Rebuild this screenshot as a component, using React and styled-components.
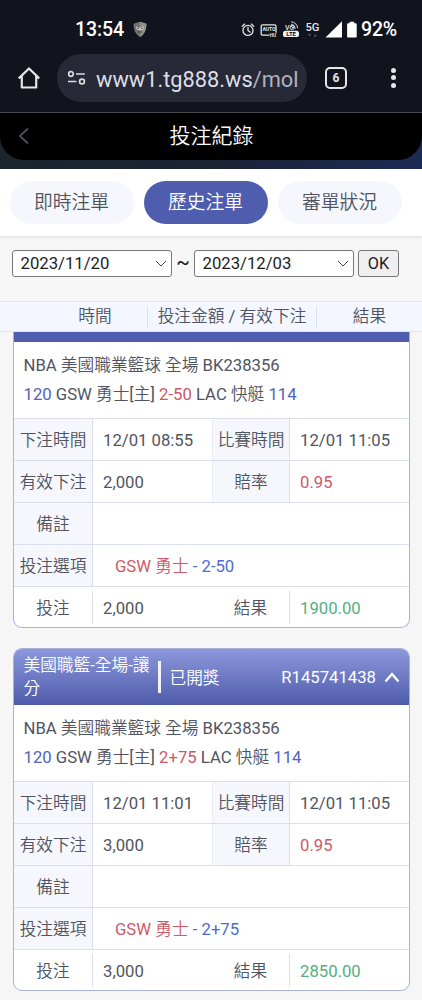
import styled, { createGlobalStyle } from "styled-components";

const bets = [
  {
    id: "R145741437",
    scrolled: true,
    type: "美國職籃-全場-讓分",
    line: "2-50",
    betTime: "12/01 08:55",
    gameTime: "12/01 11:05",
    amount: "2,000",
    odds: "0.95",
    result: "1900.00",
  },
  {
    id: "R145741438",
    type: "美國職籃-全場-讓分",
    line: "2+75",
    betTime: "12/01 11:01",
    gameTime: "12/01 11:05",
    amount: "3,000",
    odds: "0.95",
    result: "2850.00",
  },
];

function StatusIcons() {
  return (
    <svg width="120" height="20" viewBox="0 0 120 20" fill="none">
      <g stroke="#e4e5ea" strokeWidth="1.3" strokeLinecap="round">
        <circle cx="7" cy="10.4" r="5" />
        <path d="M7 7.5v3l2 1.6M1.3 6.3l2.4-2.2M12.7 6.3l-2.4-2.2" />
        <path d="M28 15.2h-6.5a1.3 1.3 0 0 1-1.3-1.3V6.2a1.3 1.3 0 0 1 1.3-1.3h12.2A1.3 1.3 0 0 1 35 6.2v6" />
      </g>
      <text x="21.4" y="11.4" fontSize="5" fontWeight="700" fill="#e4e5ea">AUTO</text>
      <text x="28.8" y="17" fontSize="4.6" fontWeight="700" fill="#e4e5ea">HU</text>
      <text x="44" y="9.8" fontSize="7" fontWeight="500" fill="#e4e5ea">VO</text>
      <path
        d="M50 4.1a5 5 0 0 1 4.3 4.7M50.3 1.8a7 7 0 0 1 6.4 6.4M49.7 6.2a3 3 0 0 1 2.5 2.5"
        stroke="#e4e5ea"
        strokeWidth="1"
      />
      <rect x="42" y="10.7" width="16" height="6.4" rx="2.6" fill="#f2f2f5" />
      <text x="45.3" y="16.2" fontSize="6" fontWeight="700" fill="#12141d">LTE</text>
      <text x="64.4" y="11" fontSize="11.2" fontWeight="500" fill="#e4e5ea">5G</text>
      <path d="M67 14h3.2l-1.6 2.4zM72.6 16.4h3.2L74.2 14z" fill="#555862" />
      <path d="M101 1.2v16.2H84.5z" fill="#fff" />
      <path
        d="M108.6 1.7h4.6v1.6h1.5a1 1 0 0 1 1 1v12.1a1 1 0 0 1-1 1h-7.6a1 1 0 0 1-1-1V4.3a1 1 0 0 1 1-1h1.5z"
        fill="#fff"
      />
    </svg>
  );
}

function ShieldIcon() {
  return (
    <svg width="14" height="17" viewBox="0 0 14 17">
      <path d="M7 .8 13.4 2.7C13.4 9 11.5 13.4 7 16 2.5 13.4.6 9 .6 2.7z" fill="#71716f" />
      <path d="M7 .8 13.4 2.7C13.4 9 11.5 13.4 7 16z" fill="#8e8e8b" />
      <path d="M2.8 5.2 6.3 7l.7-.8.7.8 3.5-1.8-1 3.6L7 9.3 3.8 8.8z" fill="#c9c9c5" />
      <path d="M4.2 7l1.7.9M9.8 7l-1.7.9M5 11h4" stroke="#3b3b3b" strokeWidth=".9" />
    </svg>
  );
}

function HomeIcon() {
  return (
    <svg width="24" height="24" viewBox="0 0 24 24" fill="none">
      <path
        d="M1.8 12.4 12 2.5l10.2 9.9M4.8 10v11.5h14.4V10"
        stroke="#e5e5ea"
        strokeWidth="2.2"
        strokeLinejoin="round"
      />
    </svg>
  );
}

function TuneIcon() {
  return (
    <svg width="20" height="16" viewBox="0 0 20 16" fill="none" stroke="#dcdde3" strokeWidth="1.7">
      <circle cx="4" cy="4" r="2.3" />
      <path d="M9 4h8.8M1 11.5h8.4" />
      <circle cx="15" cy="11.5" r="2.4" />
    </svg>
  );
}

function Chevron({ width, height, stroke, weight, d }) {
  return (
    <svg width={width} height={height} viewBox={`0 0 ${width} ${height}`} fill="none">
      <path d={d} stroke={stroke} strokeWidth={weight} />
    </svg>
  );
}

function DateSelect({ value }) {
  return (
    <SelectBox>
      {value}
      <Chevron width={12} height={7} stroke="#444" weight={1} d="M1 1l5 5 5-5" />
    </SelectBox>
  );
}

function BetCard({ bet }) {
  return (
    <Card $scrolled={bet.scrolled}>
      {bet.scrolled ? (
        <CardEdge />
      ) : (
        <CardHead>
          <BetType>{bet.type}</BetType>
          <HeadLine />
          <span>已開獎</span>
          <BetId>{bet.id}</BetId>
          <Chevron width={16} height={11} stroke="#fff" weight={2.2} d="M1.5 9.5 8 2l6.5 7.5" />
        </CardHead>
      )}
      <Info>
        <p>NBA 美國職業籃球 全場 BK238356</p>
        <p>
          <Tint $color="#5064bd">120</Tint> GSW 勇士[主] <Tint $color="#d25563">{bet.line}</Tint> LAC 快艇{" "}
          <Tint $color="#5064bd">114</Tint>
        </p>
      </Info>
      <Row>
        <Label>下注時間</Label>
        <Value>{bet.betTime}</Value>
        <Label $second>比賽時間</Label>
        <Value>{bet.gameTime}</Value>
      </Row>
      <Row>
        <Label>有效下注</Label>
        <Value>{bet.amount}</Value>
        <Label $second>賠率</Label>
        <Value $color="#cf5966">{bet.odds}</Value>
      </Row>
      <Row $wide>
        <Label>備註</Label>
        <Value />
      </Row>
      <Row $wide>
        <Label>投注選項</Label>
        <Pick>
          <Tint $color="#cf5966">GSW 勇士</Tint>
          <Tint $color="#5069d4"> - {bet.line}</Tint>
        </Pick>
      </Row>
      <Row>
        <Total>投注</Total>
        <Value>{bet.amount}</Value>
        <Total>結果</Total>
        <Value $color="#52b080">{bet.result}</Value>
      </Row>
    </Card>
  );
}

function App() {
  return (
    <Page>
      <GlobalStyle />
      <StatusBar>
        <Clock>13:54</Clock>
        <ShieldIcon />
        <StatusRight>
          <StatusIcons />
          <Battery>92%</Battery>
        </StatusRight>
      </StatusBar>
      <BrowserBar>
        <HomeIcon />
        <Address>
          <TuneIcon />
          <Url>
            www1.tg888.ws<span>/mol</span>
          </Url>
        </Address>
        <TabCount>6</TabCount>
        <Dots>
          <i />
          <i />
          <i />
        </Dots>
      </BrowserBar>
      <TitleWrap>
        <TitleBar>
          <Chevron width={12} height={18} stroke="#4c4d5a" weight={2} d="M10 1.5 2 9l8 7.5" />
          <h1>投注紀錄</h1>
        </TitleBar>
      </TitleWrap>
      <Tabs>
        <Tab>即時注單</Tab>
        <Tab $active>歷史注單</Tab>
        <Tab>審單狀況</Tab>
      </Tabs>
      <DateRow>
        <DateSelect value="2023/11/20" />
        <Tilde>~</Tilde>
        <DateSelect value="2023/12/03" />
        <OkButton>OK</OkButton>
      </DateRow>
      <Columns>
        <span>時間</span>
        <span>投注金額 / 有效下注</span>
        <span>結果</span>
      </Columns>
      <List>
        {bets.map((bet) => (
          <BetCard key={bet.id} bet={bet} />
        ))}
      </List>
    </Page>
  );
}

const GlobalStyle = createGlobalStyle`
  * {
    box-sizing: border-box;
  }
  body {
    margin: 0;
    background-color: #f6f6f7;
    font-family: Roboto, "Noto Sans CJK TC DemiLight", "Noto Sans CJK TC", sans-serif;
  }
  h1,
  p {
    margin: 0;
  }
  svg {
    display: block;
    flex-shrink: 0;
  }
`;

const Page = styled.div`
  width: 422px;
  height: 1000px;
  overflow: hidden;
  font-size: 16.7px;
  color: #505461;
`;

const StatusBar = styled.div`
  display: flex;
  align-items: center;
  height: 54px;
  padding: 5px 25px 0 75px;
  background-color: #12141d;
  color: #fff;
`;

const Clock = styled.span`
  margin-right: 9px;
  font-size: 19.5px;
  font-weight: 500;
  letter-spacing: -0.1px;
`;

const StatusRight = styled.div`
  display: flex;
  align-items: center;
  margin-left: auto;
`;

const Battery = styled.span`
  width: 36px;
  font-size: 19.5px;
  font-weight: 500;
  letter-spacing: -0.2px;
`;

const BrowserBar = styled.div`
  display: flex;
  align-items: center;
  height: 59px;
  padding: 0 26px 11px 17px;
  background-color: #12141d;
  border-bottom: 1px solid #45464b;
`;

const Address = styled.div`
  display: flex;
  align-items: center;
  width: 250px;
  height: 48px;
  margin-left: 16px;
  padding-left: 10px;
  border-radius: 24px;
  background-color: #272936;
`;

const Url = styled.span`
  margin-left: 9px;
  padding-top: 3px;
  font-size: 21.8px;
  color: #dedfe6;
  white-space: nowrap;
  span {
    color: #b0b2be;
  }
`;

const TabCount = styled.div`
  width: 22px;
  height: 22px;
  margin-left: 18px;
  border: 2px solid #e5e5ea;
  border-radius: 5px;
  font-size: 12px;
  font-weight: 700;
  line-height: 18px;
  text-align: center;
  color: #e5e5ea;
`;

const Dots = styled.div`
  display: flex;
  flex-direction: column;
  gap: 2.5px;
  margin-left: auto;
  i {
    width: 5px;
    height: 5px;
    border-radius: 50%;
    background-color: #e5e5ea;
  }
`;

const TitleWrap = styled.div`
  height: 56px;
  background: linear-gradient(90deg, #1b252c, #1b2335 50%, #1c2b55);
`;

const TitleBar = styled.header`
  display: flex;
  align-items: center;
  height: 47px;
  padding: 0 29px 2px 18px;
  border-radius: 0 0 24px 24px;
  background-color: #000;
  h1 {
    flex: 1;
    padding-bottom: 3px;
    font-size: 21px;
    font-weight: 400;
    text-align: center;
    color: #fff;
  }
`;

const Tabs = styled.nav`
  display: flex;
  gap: 10px;
  height: 67px;
  padding: 12px 9.5px 0;
  background-color: #fff;
  box-shadow: 0 1px 3px rgba(0, 0, 0, 0.12);
`;

const Tab = styled.div`
  width: 124px;
  height: 43px;
  border-radius: 22px;
  font-size: 18.8px;
  line-height: 45px;
  text-align: center;
  color: ${(props) => (props.$active ? "#fff" : "#505461")};
  background-color: ${(props) => (props.$active ? "#4f5dae" : "#f6f7fc")};
`;

const DateRow = styled.div`
  display: flex;
  height: 65px;
  padding: 14px 12px 0;
  color: #1c1c1c;
`;

const SelectBox = styled.div`
  display: flex;
  align-items: center;
  justify-content: space-between;
  width: 160px;
  height: 27px;
  padding: 0 4px 0 7.5px;
  border: 1px solid #77777a;
  border-radius: 3px;
  background-color: #fff;
`;

const Tilde = styled.span`
  width: 22px;
  font-size: 20px;
  line-height: 25px;
  text-align: center;
`;

const OkButton = styled.button`
  width: 41px;
  height: 27px;
  margin-left: 4px;
  padding: 0;
  border: 1px solid #77777a;
  border-radius: 3px;
  background-color: #efefef;
  font: inherit;
  font-size: 16.2px;
  color: #1c1c1c;
`;

const Columns = styled.div`
  display: flex;
  align-items: center;
  height: 31px;
  border: 1px solid #dfe4f4;
  border-width: 1px 0;
  background-color: #f4f7ff;
  span {
    width: 169px;
    line-height: 22px;
    text-align: center;
    white-space: nowrap;
  }
  span:first-child {
    width: 148px;
    padding-left: 43px;
    border-right: 1px solid #dbe1f3;
  }
  span:nth-child(2) {
    border-right: 1px solid #dbe1f3;
  }
  span:last-child {
    width: 105px;
  }
`;

const List = styled.main`
  display: flex;
  flex-direction: column;
  gap: 20px;
  padding: 0 12px 0 13px;
`;

const Card = styled.section`
  height: ${(props) => (props.$scrolled ? "296px" : "343px")};
  overflow: hidden;
  border: 1px solid #a9b1d6;
  border-top-width: ${(props) => (props.$scrolled ? 0 : "1px")};
  border-radius: ${(props) => (props.$scrolled ? "0 0 9px 9px" : "9px")};
  background-color: #fff;
`;

const CardEdge = styled.div`
  height: 10px;
  background-color: #505eb0;
`;

const CardHead = styled.div`
  display: flex;
  align-items: center;
  height: 56px;
  padding: 0 9px 0 9.5px;
  background: linear-gradient(#8c98db, #4e5bab);
  color: #fff;
`;

const BetType = styled.span`
  width: 134px;
  line-height: 23px;
`;

const HeadLine = styled.i`
  width: 3px;
  height: 32px;
  margin-right: 9px;
  background-color: #f2f3fb;
`;

const BetId = styled.span`
  margin: 0 8px 0 auto;
`;

const Info = styled.div`
  height: 76px;
  padding: 8.5px 9.5px 0;
  line-height: 29px;
  white-space: nowrap;
`;

const Tint = styled.span`
  color: ${(props) => props.$color};
  white-space: pre;
`;

const Row = styled.div`
  display: grid;
  grid-template-columns: ${(props) => (props.$wide ? "79px 1fr" : "79px 119px 78px 1fr")};
  grid-template-rows: 41px;
  height: 42px;
  border-top: 1px solid #d9dff0;
  line-height: 43px;
`;

const Label = styled.div`
  border-right: 1px solid #d9dff0;
  border-left: ${(props) => (props.$second ? "1px solid #e9ecf6" : "none")};
  background-color: #f6f7fc;
  text-align: center;
  white-space: nowrap;
`;

const Total = styled.div`
  height: 33px;
  margin-top: 4px;
  border-right: 1px solid #d9dff0;
  line-height: 35px;
  text-align: center;
`;

const Value = styled.div`
  padding-left: 10px;
  color: ${(props) => props.$color || "inherit"};
  white-space: nowrap;
`;

const Pick = styled(Value)`
  padding-left: 22px;
`;

export default App;
